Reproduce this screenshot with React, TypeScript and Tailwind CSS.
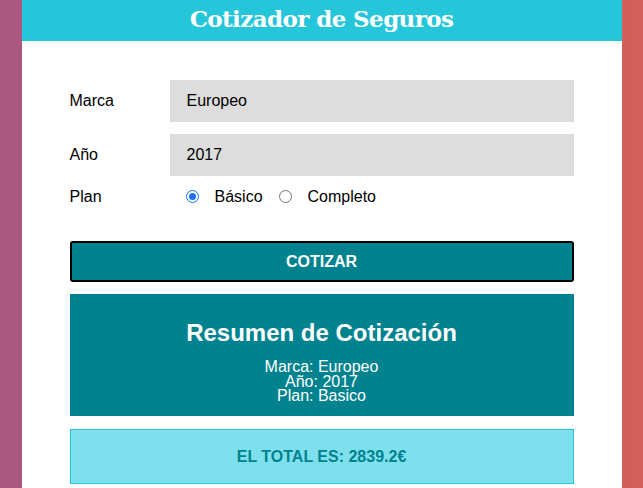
export default function App() {
  return (
    <div
      className="min-h-[488px] w-full bg-gradient-to-r from-[#a8577f] to-[#d35f59] font-['Liberation_Sans',Arial,sans-serif]"
    >
      <div className="mx-auto w-[600px] min-h-[488px] bg-white">
        <header className="h-[41px] bg-[#26c6da] flex justify-center pt-[6px]">
          <h1 className="font-['DejaVu_Serif',serif] font-bold text-[23px] leading-[25px] text-white tracking-[-0.6px]">
            Cotizador de Seguros
          </h1>
        </header>

        <div className="px-12 pt-[39px] pb-4">
          <form>
            <div className="flex items-center mb-[12px]">
              <label className="w-[100px] shrink-0 text-[16px] text-black">Marca</label>
              <div className="flex-1 h-[42px] bg-[#dddddd] px-[17px] flex items-center text-[16px] text-black">
                Europeo
              </div>
            </div>
            <div className="flex items-center mb-[12px]">
              <label className="w-[100px] shrink-0 text-[16px] text-black">Año</label>
              <div className="flex-1 h-[42px] bg-[#dddddd] px-[17px] flex items-center text-[16px] text-black">
                2017
              </div>
            </div>
            <div className="flex items-center h-[17px]">
              <label className="w-[100px] shrink-0 text-[16px] text-black">Plan</label>
              <div className="flex items-center text-[16px] text-black ml-[16px]">
                <span className="w-[13px] h-[13px] rounded-full border border-[#1a73e8] flex items-center justify-center">
                  <span className="w-[7px] h-[7px] rounded-full bg-[#1a73e8]" />
                </span>
                <span className="ml-[16px]">Básico</span>
                <span className="ml-[16px] w-[13px] h-[13px] rounded-full border border-[#767676]" />
                <span className="ml-[16px]">Completo</span>
              </div>
            </div>

            <button
              type="button"
              className="mt-[36px] w-full h-[41px] bg-[#00838f] text-white uppercase font-bold text-[16px] border-2 border-black rounded-[3px]"
            >
              Cotizar
            </button>
          </form>

          <div className="mt-[12px] h-[122px] bg-[#00838f] text-white text-center flex flex-col items-center pt-[27px]">
            <h2 className="text-[24px] font-bold leading-[24px]">Resumen de Cotización</h2>
            <div className="mt-[15px] text-[16px] leading-[14.5px]">
              <p>Marca: Europeo</p>
              <p>Año: 2017</p>
              <p>Plan: Basico</p>
            </div>
          </div>

          <div className="mt-[13px] h-[55px] bg-[#7fe0ed] border border-[#26c6da] flex items-center justify-center">
            <p className="text-[#00838f] font-bold uppercase text-[16px]">El total es: 2839.2€</p>
          </div>
        </div>
      </div>
    </div>
  );
}
